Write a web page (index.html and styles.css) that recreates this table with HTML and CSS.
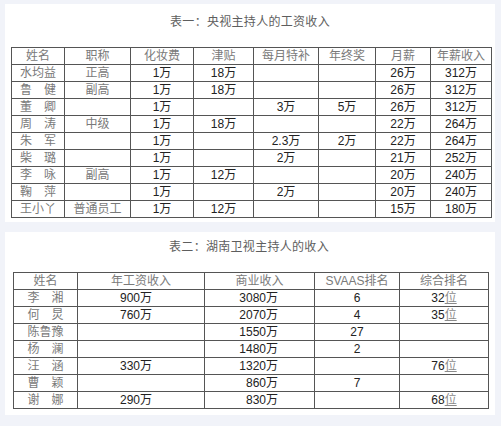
FILE: index.html
```html
<!DOCTYPE html>
<html lang="zh">
<head>
<meta charset="utf-8">
<title>主持人收入</title>
<link rel="stylesheet" href="styles.css">
</head>
<body>
<section class="panel panel-one">
  <h2 class="title">表一：央视主持人的工资收入</h2>
  <div class="grid grid-one">
    <div class="c h">姓名</div><div class="c h">职称</div><div class="c h">化妆费</div><div class="c h">津贴</div><div class="c h">每月特补</div><div class="c h">年终奖</div><div class="c h">月薪</div><div class="c h">年薪收入</div>

    <div class="c t">水均益</div><div class="c t">正高</div><div class="c">1万</div><div class="c">18万</div><div class="c"></div><div class="c"></div><div class="c">26万</div><div class="c">312万</div>
    <div class="c t">鲁　健</div><div class="c t">副高</div><div class="c">1万</div><div class="c">18万</div><div class="c"></div><div class="c"></div><div class="c">26万</div><div class="c">312万</div>
    <div class="c t">董　卿</div><div class="c t"></div><div class="c">1万</div><div class="c"></div><div class="c">3万</div><div class="c">5万</div><div class="c">26万</div><div class="c">312万</div>
    <div class="c t">周　涛</div><div class="c t">中级</div><div class="c">1万</div><div class="c">18万</div><div class="c"></div><div class="c"></div><div class="c">22万</div><div class="c">264万</div>
    <div class="c t">朱　军</div><div class="c t"></div><div class="c">1万</div><div class="c"></div><div class="c">2.3万</div><div class="c">2万</div><div class="c">22万</div><div class="c">264万</div>
    <div class="c t">柴　璐</div><div class="c t"></div><div class="c">1万</div><div class="c"></div><div class="c">2万</div><div class="c"></div><div class="c">21万</div><div class="c">252万</div>
    <div class="c t">李　咏</div><div class="c t">副高</div><div class="c">1万</div><div class="c">12万</div><div class="c"></div><div class="c"></div><div class="c">20万</div><div class="c">240万</div>
    <div class="c t">鞠　萍</div><div class="c t"></div><div class="c">1万</div><div class="c"></div><div class="c">2万</div><div class="c"></div><div class="c">20万</div><div class="c">240万</div>
    <div class="c t">王小丫</div><div class="c t">普通员工</div><div class="c">1万</div><div class="c">12万</div><div class="c"></div><div class="c"></div><div class="c">15万</div><div class="c">180万</div>
  </div>
</section>

<section class="panel panel-two">
  <h2 class="title">表二：湖南卫视主持人的收入</h2>
  <div class="grid grid-two">
    <div class="c h">姓名</div><div class="c h">年工资收入</div><div class="c h">商业收入</div><div class="c h">SVAAS排名</div><div class="c h">综合排名</div>

    <div class="c t">李　湘</div><div class="c wage">900万</div><div class="c biz">3080万</div><div class="c">6</div><div class="c">32<span class="link">位</span></div>
    <div class="c t">何　炅</div><div class="c wage">760万</div><div class="c biz">2070万</div><div class="c">4</div><div class="c">35<span class="link">位</span></div>
    <div class="c t">陈鲁豫</div><div class="c wage"></div><div class="c biz">1550万</div><div class="c">27</div><div class="c"></div>
    <div class="c t">杨　澜</div><div class="c wage"></div><div class="c biz">1480万</div><div class="c">2</div><div class="c"></div>
    <div class="c t">汪　涵</div><div class="c wage">330万</div><div class="c biz">1320万</div><div class="c"></div><div class="c">76<span class="link">位</span></div>
    <div class="c t">曹　颖</div><div class="c wage"></div><div class="c biz">860万</div><div class="c">7</div><div class="c"></div>
    <div class="c t">谢　娜</div><div class="c wage">290万</div><div class="c biz">830万</div><div class="c"></div><div class="c">68<span class="link">位</span></div>
  </div>
</section>
</body>
</html>
```

FILE: styles.css
```css
html, body {
  margin: 0;
  padding: 0;
}

body {
  background: #f1f3f9;
  font-family: "Liberation Sans", "Noto Sans CJK SC", sans-serif;
  font-size: 12px;
  color: #222;
  padding-top: 4px;
}

.panel {
  background: #ffffff;
  width: 490px;
  margin-left: 5px;
  box-sizing: border-box;
}

.panel-one {
  height: 218px;
  padding: 10px 0 4px 6px;
}

.panel-two {
  height: 183px;
  margin-top: 10px;
  padding: 7px 0 6px 8px;
}

.title {
  margin: 0 0 16px 0;
  font-size: 12px;
  font-weight: normal;
  line-height: 17px;
  height: 17px;
  color: #5e5e5e;
  text-align: center;
  letter-spacing: 0.3px;
}

.panel-one .title {
  padding-right: 6px;
}

.panel-two .title {
  padding-right: 10px;
}

.grid {
  display: grid;
  grid-auto-rows: 17px;
  width: max-content;
  border-top: 1px solid #555;
  border-left: 1px solid #555;
}

.grid-one {
  grid-template-columns: 53px 66px 63px 60px 65px 57px 55px 61px;
}

.grid-two {
  grid-template-columns: 64px 127px 110px 85px 89px;
}

.c {
  box-sizing: border-box;
  border-right: 1px solid #555;
  border-bottom: 1px solid #555;
  height: 17px;
  line-height: 16px;
  text-align: center;
  white-space: nowrap;
  overflow: hidden;
}

.h,
.t {
  color: #7a7a7a;
}

.wage {
  padding-right: 10px;
}

.biz {
  text-align: right;
  padding-right: 36px;
}

.link {
  color: #8a8a8a;
  text-decoration: underline;
}
```
